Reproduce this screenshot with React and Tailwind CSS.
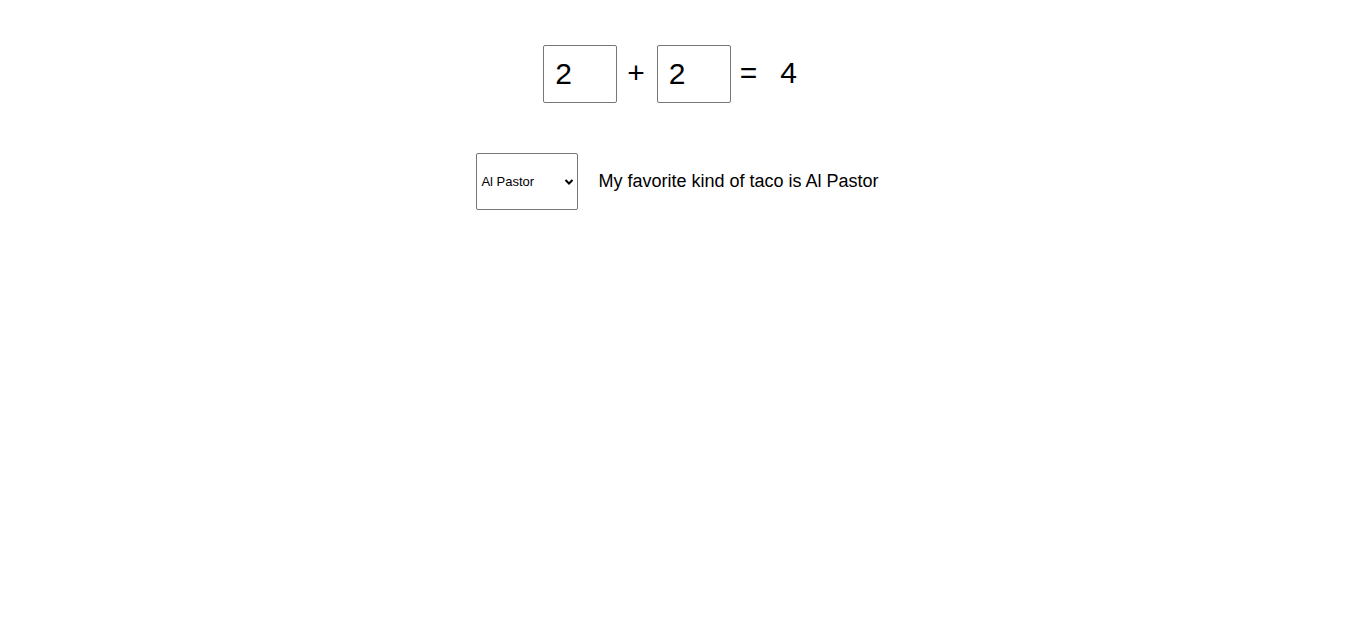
export default function App() {
  return (
    <div className="min-h-screen bg-white text-black" style={{ fontFamily: '"Liberation Sans", Arial, sans-serif' }}>
      <div className="flex justify-center pt-[45px] pr-[17px]">
        <div className="flex items-center text-[30px] leading-none">
          <input
            type="text"
            defaultValue="2"
            className="w-[74px] h-[58px] border border-[#767676] rounded-[2px] pl-[11px] text-[30px] outline-none"
          />
          <span className="ml-[10px] mr-[12px] mb-[3px]">+</span>
          <input
            type="text"
            defaultValue="2"
            className="w-[74px] h-[58px] border border-[#767676] rounded-[2px] pl-[11px] text-[30px] outline-none"
          />
          <span className="ml-[9px] mb-[3px]">=</span>
          <span className="ml-[23px] mb-[3px]">4</span>
        </div>
      </div>
      <div className="flex justify-center items-center mt-[50px] pr-[2px]">
        <div className="relative w-[102px] h-[57px]">
          <select
            defaultValue="Al Pastor"
            className="appearance-none w-full h-full border border-[#767676] rounded-[2px] bg-white pl-[4px] text-[13px] text-black outline-none"
          >
            <option>Al Pastor</option>
            <option>Carnitas</option>
            <option>Barbacoa</option>
          </select>
          <svg className="pointer-events-none absolute right-[4px] top-1/2 -translate-y-1/2" width="10" height="8" viewBox="0 0 10 8">
            <path d="M1.5 2 L5 5.5 L8.5 2" fill="none" stroke="black" strokeWidth="2" />
          </svg>
        </div>
        <span className="ml-[20px] text-[18px]">My favorite kind of taco is Al Pastor</span>
      </div>
    </div>
  );
}
